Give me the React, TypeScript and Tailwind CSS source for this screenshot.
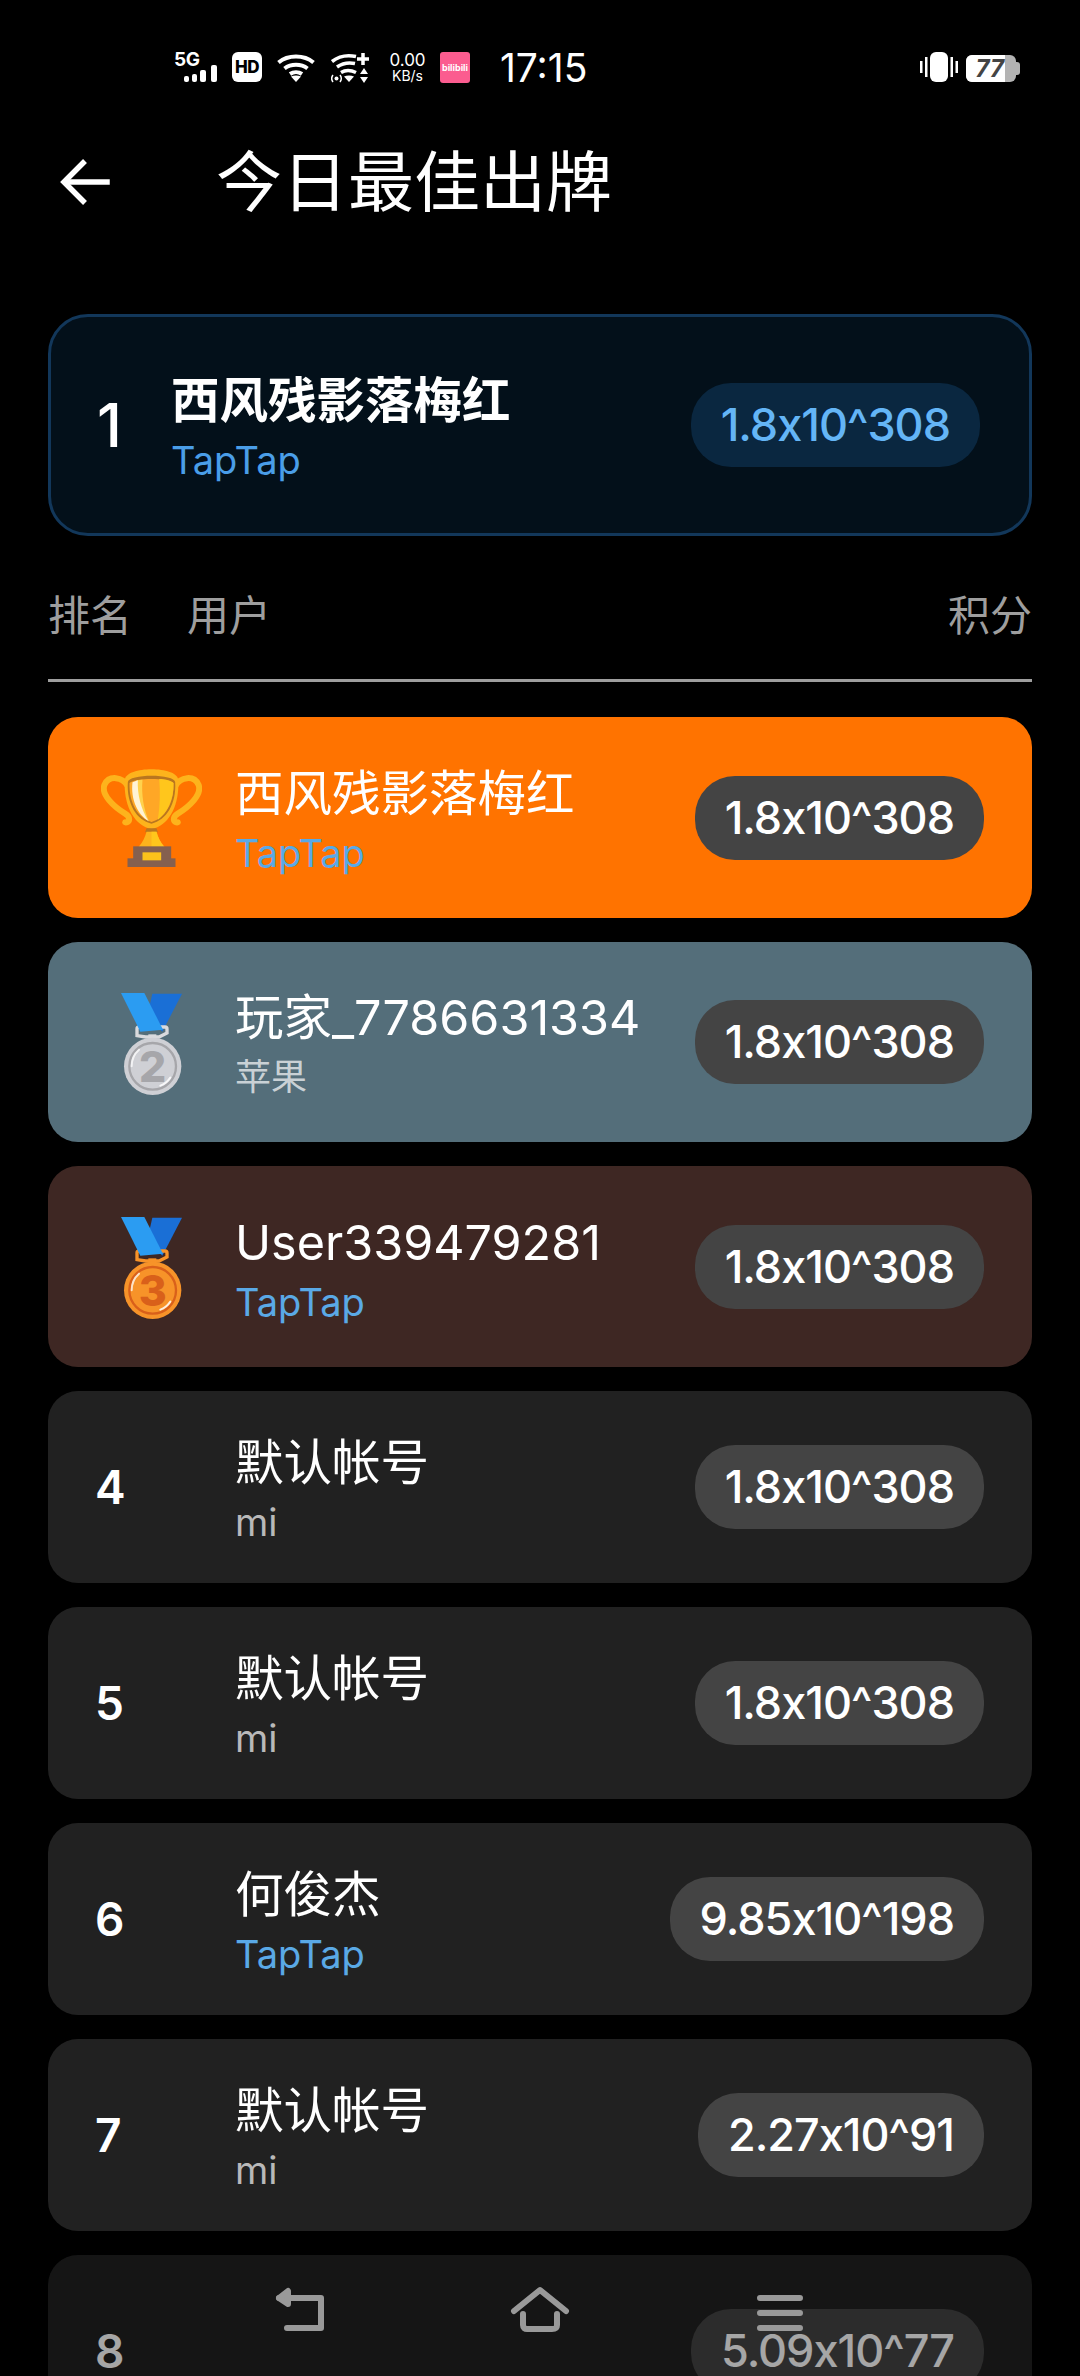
import React from 'react';

const latin = 'font-["Inter","Noto_Sans_CJK_SC",sans-serif]';

type Row = {
  rank: number;
  name: string;
  source: string;
  score: string;
  bg: string;
  height: string;
  blue?: boolean;
};

const rows: Row[] = [
  { rank: 1, name: '西风残影落梅红', source: 'TapTap', score: '1.8x10^308', bg: 'bg-[#ff7300]', height: 'h-[201px]', blue: true },
  { rank: 2, name: '玩家_7786631334', source: '苹果', score: '1.8x10^308', bg: 'bg-[#546e7a]', height: 'h-[200px]' },
  { rank: 3, name: 'User339479281', source: 'TapTap', score: '1.8x10^308', bg: 'bg-[#3e2723]', height: 'h-[201px]', blue: true },
  { rank: 4, name: '默认帐号', source: 'mi', score: '1.8x10^308', bg: 'bg-[#212121]', height: 'h-[192px]' },
  { rank: 5, name: '默认帐号', source: 'mi', score: '1.8x10^308', bg: 'bg-[#212121]', height: 'h-[192px]' },
  { rank: 6, name: '何俊杰', source: 'TapTap', score: '9.85x10^198', bg: 'bg-[#212121]', height: 'h-[192px]', blue: true },
  { rank: 7, name: '默认帐号', source: 'mi', score: '2.27x10^91', bg: 'bg-[#212121]', height: 'h-[192px]' },
];

function Trophy() {
  return (
    <svg width="101" height="98" viewBox="127 118 300 294" fill="none">
      <path d="M205 168C190 142 150 135 136 165C124 195 165 232 198 252C214 262 214 280 198 278" stroke="#fdb31c" strokeWidth="18" strokeLinecap="round" />
      <path d="M349 168C364 142 404 135 418 165C430 195 389 232 356 252C340 262 340 280 356 278" stroke="#fdb31c" strokeWidth="18" strokeLinecap="round" />
      <path d="M197 150C200 108 354 108 357 150C362 225 330 288 277 298C224 288 192 225 197 150Z" fill="#fdb31c" />
      <path d="M206 158C206 132 348 132 348 158C352 222 322 272 277 282C232 272 202 222 206 158Z" fill="#b9761f" />
      <path d="M211 160C230 144 324 144 343 160C345 220 318 265 277 277C236 265 209 220 211 160Z" fill="#ffa726" />
      <path d="M300 148C316 148 334 152 343 160C345 210 322 252 296 270C302 230 304 190 300 148Z" fill="#ffc61c" />
      <path d="M232 152L250 150C246 195 254 240 270 276C244 244 232 200 232 152Z" fill="#ffd24d" />
      <path d="M220 158L236 152C234 195 246 240 268 274C236 256 214 210 220 158Z" fill="#fff3d6" />
      <path d="M262 296H292L296 308H258Z" fill="#b9761f" />
      <path d="M262 306H292C296 322 304 338 316 352H238C250 338 258 322 262 306Z" fill="#fdb31c" />
      <path d="M277 306H292C296 322 304 338 316 352H277Z" fill="#ffc61c" />
      <rect x="222" y="350" width="114" height="38" fill="#85604f" />
      <rect x="205" y="386" width="144" height="26" fill="#85604f" />
      <rect x="250" y="368" width="56" height="24" fill="#fcc21b" />
    </svg>
  );
}

function Medal({ n, disc, ring, bail }: { n: string; disc: string; ring: string; bail: string }) {
  return (
    <svg width="61" height="102" viewBox="122 98 183 306" fill="none">
      <path d="M216 100H305L246 214L200 170Z" fill="#1a6fd6" />
      <path d="M170 226V206C170 202 172 200 176 200H254C258 200 260 202 260 206V218L236 230H196Z" stroke={bail} strokeWidth="10" />
      <rect x="204" y="222" width="24" height="20" fill={bail} />
      <path d="M122 98H192L248 208L180 214Z" fill="#2b9cf2" />
      <circle cx="217" cy="318" r="86" fill={disc} />
      <circle cx="217" cy="318" r="70" stroke={ring} strokeWidth="7" />
      <path d="M154 318C154 298 162 280 176 268" stroke="#ffffff" strokeOpacity="0.75" strokeWidth="6" strokeLinecap="round" />
      <path d="M270 352C262 364 252 372 240 376" stroke="#ffffff" strokeOpacity="0.85" strokeWidth="6" strokeLinecap="round" />
      <text x="217" y="364" textAnchor="middle" fontSize="128" fontWeight="800" fill={ring} fontFamily="Inter, sans-serif">
        {n}
      </text>
    </svg>
  );
}

function RankCell({ rank }: { rank: number }) {
  if (rank === 1) {
    return (
      <div className="w-[187px] shrink-0 pl-[53px]">
        <Trophy />
      </div>
    );
  }
  if (rank === 2) {
    return (
      <div className="w-[187px] shrink-0 pl-[73px] pt-[3px]">
        <Medal n="2" disc="#cfd0d5" ring="#a6a6aa" bail="#d9dadd" />
      </div>
    );
  }
  if (rank === 3) {
    return (
      <div className="w-[187px] shrink-0 pl-[73px] pt-[3px]">
        <Medal n="3" disc="#f79329" ring="#d9601a" bail="#f79329" />
      </div>
    );
  }
  return <div className="w-[187px] shrink-0 pl-[47px] text-[46px] font-semibold text-white leading-none">{rank}</div>;
}

function ScorePill({ score }: { score: string }) {
  return (
    <div className="h-[84px] flex items-center rounded-[40px] bg-[#444444] px-[30px] text-[45px] font-medium text-white tracking-[-1px]">
      {score}
    </div>
  );
}

function RankRow({ row }: { row: Row }) {
  return (
    <div className={`${row.height} ${row.bg} flex items-center rounded-[30px] pr-[48px]`}>
      <RankCell rank={row.rank} />
      <div className="flex-1 min-w-0 pt-[3px]">
        <div className="text-[48.5px] leading-[60px] text-white whitespace-nowrap">{row.name}</div>
        <div
          className={`leading-[44px] mt-[7px] ${row.source === '苹果' ? 'text-[36px]' : 'text-[38px]'} ${row.blue ? 'text-[#5aa9e6]' : 'text-white/70'}`}
        >
          {row.source}
        </div>
      </div>
      <ScorePill score={row.score} />
    </div>
  );
}

function Wifi({ width = 38 }: { width?: number }) {
  return (
    <svg width={width} height="28" viewBox="0 0 38 28" fill="none" stroke="#ffffff" strokeWidth="4">
      <path d="M1.5 8.5C11 0.5 27 0.5 36.5 8.5" />
      <path d="M7.5 14.5C14 9.5 24 9.5 30.5 14.5" />
      <path d="M13 20C16.5 17.5 21.5 17.5 25 20" />
      <path d="M19 28L14 22.5C17 21 21 21 24 22.5Z" fill="#ffffff" stroke="none" />
    </svg>
  );
}

function StatusBar() {
  return (
    <div className="h-[92px] pt-[52px] pl-[174px] pr-[60px] flex items-start text-white">
      <div className="relative w-[45px] h-[30px]">
        <span className="absolute left-0 top-[-1px] text-[19px] leading-[17px] font-bold tracking-[-0.5px]">5G</span>
        <svg className="absolute left-[9px] top-[12px]" width="36" height="18" viewBox="0 0 36 18" fill="#ffffff">
          <rect x="1" y="12" width="5" height="6" rx="2" />
          <rect x="9" y="10" width="5" height="8" rx="2" />
          <rect x="17" y="6" width="6" height="12" rx="2" />
          <rect x="28" y="1" width="6" height="17" rx="2" />
        </svg>
      </div>
      <div className="ml-[13px] w-[30px] h-[30px] rounded-[6px] bg-white flex items-center justify-center text-[17px] font-extrabold text-black leading-none tracking-[-0.5px]">
        HD
      </div>
      <div className="ml-[15px] mt-[2px]">
        <Wifi />
      </div>
      <div className="ml-[16px] mt-[1px]">
        <svg width="38" height="30" viewBox="0 0 38 30" fill="none" stroke="#ffffff">
          <path d="M1 8.5C8 3 16 1.5 25 3.5" strokeWidth="3.5" />
          <path d="M6 14C11 10.5 17 9 24 10.5" strokeWidth="3.5" />
          <path d="M10 19.5C14 17 20 17 25 19.5" strokeWidth="3.5" />
          <path d="M18 29L13 23.5C16 22 20 22 23 23.5Z" fill="#ffffff" stroke="none" />
          <path d="M32 0V12M26 6H38" strokeWidth="3.5" />
          <path d="M33 15L37 21H29Z M33 30L29 24H37Z" fill="#ffffff" stroke="none" />
          <path d="M2 22C0.5 24 0.5 27 2 29M9 22C10.5 24 10.5 27 9 29" strokeWidth="1.5" />
          <circle cx="5.5" cy="25.5" r="2" fill="#ffffff" stroke="none" />
        </svg>
      </div>
      <div className="ml-[20px] w-[37px] flex flex-col items-center text-white leading-none">
        <span className="text-[17px] leading-[16px]">0.00</span>
        <span className="text-[14px] leading-[14px] mt-[1px]">KB/s</span>
      </div>
      <div className="ml-[14px] w-[30px] h-[31px] rounded-[3px] bg-[#fb5c8f] flex items-center justify-center text-[9px] font-bold text-white leading-none">
        bilibili
      </div>
      <div className="ml-[30px] text-[39px] leading-[32px] font-normal">17:15</div>
      <div className="flex-1" />
      <svg width="38" height="30" viewBox="0 0 38 30" fill="#ffffff">
        <rect x="0" y="9" width="2.5" height="12" />
        <rect x="5" y="5" width="2.5" height="20" />
        <rect x="10" y="0" width="18" height="30" rx="6" />
        <rect x="30.5" y="5" width="2.5" height="20" />
        <rect x="35.5" y="9" width="2.5" height="12" />
      </svg>
      <div className="ml-[8px] mt-[3px] flex items-center">
        <div className="w-[50px] h-[27px] rounded-[6px] bg-[#b3b3b3]">
          <div className="w-[39px] h-full rounded-l-[6px] bg-white flex items-center justify-end pr-[1px] text-[24px] font-bold italic text-[#444444] leading-none">
            77
          </div>
        </div>
        <div className="w-[4px] h-[13px] rounded-r-[3px] bg-[#b3b3b3]" />
      </div>
    </div>
  );
}

function NavBar() {
  return (
    <div className="absolute left-0 right-0 bottom-0 h-[136px] bg-black/35">
      <svg className="absolute inset-0" width="1080" height="136" viewBox="0 2240 1080 136" fill="none" stroke="#999999" strokeWidth="6" strokeLinecap="round" strokeLinejoin="round">
        <path d="M279 2298H321V2328H287" />
        <path d="M279 2298L288 2291V2304Z" fill="#999999" />
        <path d="M514 2311L540 2290L566 2311" />
        <path d="M523 2314V2325C523 2328 525 2329 527 2329H552C555 2329 557 2328 557 2325V2314" />
        <path d="M760 2298H800M760 2313H800M760 2328H800" />
      </svg>
    </div>
  );
}

export default function App() {
  return (
    <div className={`relative w-[1080px] h-[2376px] overflow-hidden bg-black text-white ${latin}`}>
      <StatusBar />
      <div className="h-[88px] mt-[46px] flex items-center pl-[60px]">
        <svg width="50" height="50" viewBox="0 0 50 50" fill="none" stroke="#ffffff" strokeWidth="5.5" strokeLinecap="square">
          <path d="M47 25H6" />
          <path d="M25 4L4 25L25 46" strokeLinecap="butt" />
        </svg>
        <h1 className="ml-[106px] text-[66px] font-normal leading-none whitespace-nowrap">今日最佳出牌</h1>
      </div>

      <div className="px-[48px] mt-[88px]">
        <div className="h-[222px] flex items-center rounded-[40px] border-[3px] border-[#12375a] bg-[#03101a] pr-[49px]">
          <div className="w-[120px] shrink-0 pl-[46px] text-[60px] font-medium leading-none text-white">1</div>
          <div className="flex-1 pt-[3px]">
            <div className="text-[48.5px] leading-[60px] font-bold text-white">西风残影落梅红</div>
            <div className="text-[38px] leading-[44px] mt-[7px] text-[#4a9ee8]">TapTap</div>
          </div>
          <div className="h-[84px] flex items-center rounded-[40px] bg-[#0a2740] px-[30px] text-[45px] font-medium text-[#64b5f6] tracking-[-1px]">
            1.8x10^308
          </div>
        </div>

        <div className="mt-[55px] flex items-center h-[50px] text-[42px] leading-none text-[#9e9e9e]">
          <span className="w-[139px]">排名</span>
          <span className="flex-1">用户</span>
          <span>积分</span>
        </div>
        <div className="mt-[38px] h-[3px] bg-[#9e9e9e]" />

        <div className="mt-[35px] flex flex-col gap-[24px]">
          {rows.map((row) => (
            <RankRow key={row.rank} row={row} />
          ))}
          <div className="h-[192px] bg-[#212121] flex items-center rounded-[30px] pr-[48px]">
            <RankCell rank={8} />
            <div className="flex-1" />
            <ScorePill score="5.09x10^77" />
          </div>
        </div>
      </div>
      <NavBar />
    </div>
  );
}
